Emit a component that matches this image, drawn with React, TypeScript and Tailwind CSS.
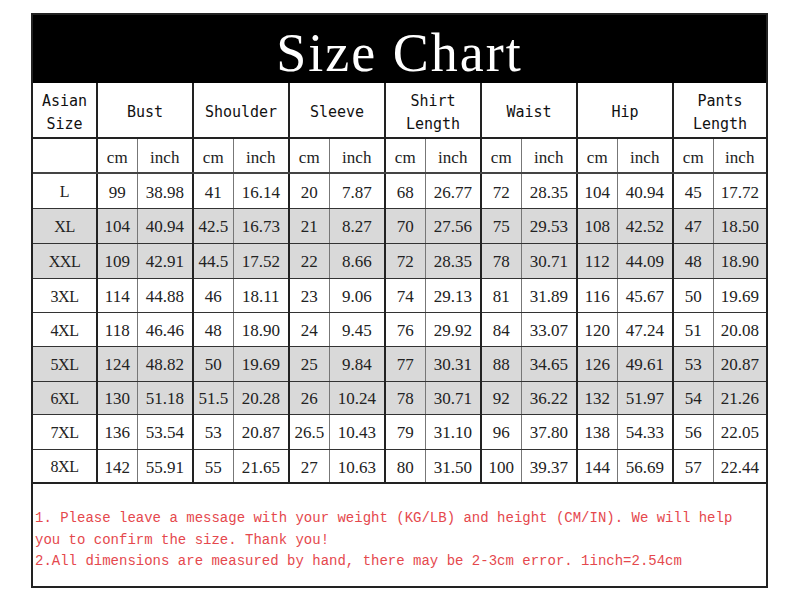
const groups = [
  ["Bust"],
  ["Shoulder"],
  ["Sleeve"],
  ["Shirt", "Length"],
  ["Waist"],
  ["Hip"],
  ["Pants", "Length"],
];

type Row = { size: string; vals: string[]; gray: boolean; h: string };

const rows: Row[] = [
  { size: "L", vals: ["99", "38.98", "41", "16.14", "20", "7.87", "68", "26.77", "72", "28.35", "104", "40.94", "45", "17.72"], gray: false, h: "h-[35px]" },
  { size: "XL", vals: ["104", "40.94", "42.5", "16.73", "21", "8.27", "70", "27.56", "75", "29.53", "108", "42.52", "47", "18.50"], gray: true, h: "h-[35px]" },
  { size: "XXL", vals: ["109", "42.91", "44.5", "17.52", "22", "8.66", "72", "28.35", "78", "30.71", "112", "44.09", "48", "18.90"], gray: true, h: "h-[35px]" },
  { size: "3XL", vals: ["114", "44.88", "46", "18.11", "23", "9.06", "74", "29.13", "81", "31.89", "116", "45.67", "50", "19.69"], gray: false, h: "h-[34px]" },
  { size: "4XL", vals: ["118", "46.46", "48", "18.90", "24", "9.45", "76", "29.92", "84", "33.07", "120", "47.24", "51", "20.08"], gray: false, h: "h-[34px]" },
  { size: "5XL", vals: ["124", "48.82", "50", "19.69", "25", "9.84", "77", "30.31", "88", "34.65", "126", "49.61", "53", "20.87"], gray: true, h: "h-[35px]" },
  { size: "6XL", vals: ["130", "51.18", "51.5", "20.28", "26", "10.24", "78", "30.71", "92", "36.22", "132", "51.97", "54", "21.26"], gray: true, h: "h-[33px]" },
  { size: "7XL", vals: ["136", "53.54", "53", "20.87", "26.5", "10.43", "79", "31.10", "96", "37.80", "138", "54.33", "56", "22.05"], gray: false, h: "h-[35px]" },
  { size: "8XL", vals: ["142", "55.91", "55", "21.65", "27", "10.63", "80", "31.50", "100", "39.37", "144", "56.69", "57", "22.44"], gray: false, h: "h-[33px]" },
];

// cm columns get a thin grey divider, inch columns close the group with a heavy line
const sideBorder = (i: number) => {
  if (i === 13) return "";
  return i % 2 === 0 ? "border-r border-r-[#777]" : "border-r-2 border-r-[#222]";
};

export default function App() {
  return (
    <div className="w-[800px] h-[603px] bg-white pt-[13px] pl-[31px]">
      <div className="w-[737px] border-2 border-[#222] bg-white">
        {/* Title band */}
        <div className="h-[68px] bg-black flex items-center justify-center pt-[8px]">
          <span className="font-['Liberation_Serif',serif] text-[54px] leading-none tracking-[2px] text-white">
            Size Chart
          </span>
        </div>

        <table className="w-full table-fixed border-collapse">
          <colgroup>
            <col className="w-[64px]" />
            {groups.map((_, i) => (
              <>
                <col key={`c${i}`} className="w-[40px]" />
                <col key={`i${i}`} className={i === 6 ? "w-[53px]" : "w-[56px]"} />
              </>
            ))}
          </colgroup>
          <thead>
            <tr className="h-[55px] font-['DejaVu_Sans_Mono',monospace] text-[15px] leading-[23px] text-[#111]">
              <th className="font-normal pt-[6px] border-r-2 border-r-[#222] border-b-2 border-b-[#222]">
                Asian
                <br />
                Size
              </th>
              {groups.map((g, i) => (
                <th
                  key={i}
                  colSpan={2}
                  className={`font-normal pt-[5px] border-b-2 border-b-[#222] ${
                    i === 6 ? "" : "border-r-2 border-r-[#222]"
                  }`}
                >
                  {g.map((line, j) => (
                    <div key={j}>{line}</div>
                  ))}
                </th>
              ))}
            </tr>
            <tr className="h-[35px] font-['Liberation_Serif',serif] text-[17px] text-[#222]">
              <th className="font-normal border-r-2 border-r-[#222] border-b-2 border-b-[#444]" />
              {groups.map((_, i) => (
                <>
                  <th
                    key={`cm${i}`}
                    className={`font-normal pt-[5px] border-b-2 border-b-[#444] ${sideBorder(i * 2)}`}
                  >
                    cm
                  </th>
                  <th
                    key={`in${i}`}
                    className={`font-normal pt-[5px] border-b-2 border-b-[#444] ${sideBorder(i * 2 + 1)}`}
                  >
                    inch
                  </th>
                </>
              ))}
            </tr>
          </thead>
          <tbody className="font-['Liberation_Serif',serif] text-[17px] text-[#222]">
            {rows.map((r, ri) => (
              <tr
                key={r.size}
                className={`${r.h} ${r.gray ? "bg-[#d9d9d9]" : "bg-white"}`}
              >
                <td
                  className={`text-center pt-[3px] text-[16px] tracking-[-0.5px] border-r-2 border-r-[#222] ${
                    ri === rows.length - 1 ? "" : "border-b border-b-[#333]"
                  }`}
                >
                  {r.size}
                </td>
                {r.vals.map((v, i) => (
                  <td
                    key={i}
                    className={`text-center pt-[3px] whitespace-nowrap ${sideBorder(i)} ${
                      ri === rows.length - 1 ? "" : "border-b border-b-[#333]"
                    }`}
                  >
                    {v}
                  </td>
                ))}
              </tr>
            ))}
          </tbody>
        </table>

        {/* Notes */}
        <div className="h-[104px] border-t-2 border-t-[#222] pt-[24px] pl-[2px] font-['Liberation_Mono',monospace] text-[14px] leading-[21.5px] text-[#e5484d] whitespace-pre">
          <div>1. Please leave a message with your weight (KG/LB) and height (CM/IN). We will help</div>
          <div>you to confirm the size. Thank you!</div>
          <div>2.All dimensions are measured by hand, there may be 2-3cm error. 1inch=2.54cm</div>
        </div>
      </div>
    </div>
  );
}
